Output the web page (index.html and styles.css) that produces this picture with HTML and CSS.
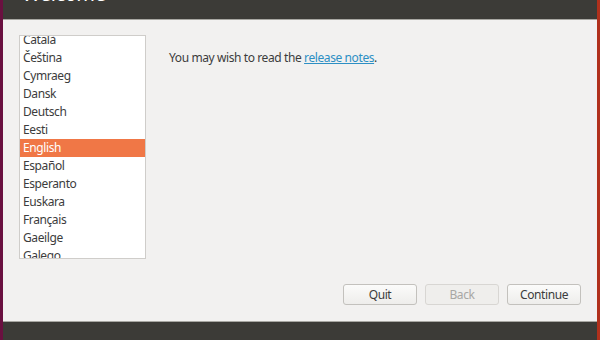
FILE: index.html
```html
<!DOCTYPE html>
<html>
<head>
    <link rel="stylesheet" href="styles.css">
</head>
<body>
    <div class="edge edge-left"></div>
    <div class="window">
        <div class="header">
            <div class="title">Welcome</div>
        </div>
        <div class="content">
            <div class="main">
                <div class="languages">
                    <ul class="lang-list">
                        <li>Català</li>
                        <li>Čeština</li>
                        <li>Cymraeg</li>
                        <li>Dansk</li>
                        <li>Deutsch</li>
                        <li>Eesti</li>
                        <li class="selected">English</li>
                        <li>Español</li>
                        <li>Esperanto</li>
                        <li>Euskara</li>
                        <li>Français</li>
                        <li>Gaeilge</li>
                        <li>Galego</li>
                    </ul>
                </div>
                <p class="notes">You may wish to read the <a href="#">release notes</a>.</p>
            </div>
            <div class="buttons">
                <button class="btn">Quit</button>
                <button class="btn" disabled>Back</button>
                <button class="btn">Continue</button>
            </div>
        </div>
        <div class="footer"></div>
    </div>
    <div class="edge edge-right"></div>
</body>
</html>
```

FILE: styles.css
```css
body {
    margin: 0;
    width: 600px;
    height: 340px;
    display: flex;
    overflow: hidden;
    font-family: "Noto Sans", "DejaVu Sans", sans-serif;
    font-size: 12px;
    letter-spacing: -0.4px;
    color: #3c3c3c;
}
.edge {
    width: 3px;
}
.edge-left {
    background-color: #6a1040;
}
.edge-right {
    background-color: #b0301c;
}
.window {
    flex: 1;
    display: flex;
    flex-direction: column;
    background-color: #f2f1f0;
}
.header {
    height: 19px;
    flex-shrink: 0;
    background-color: #3c3b37;
    border-bottom: 1px solid #a8a7a2;
    overflow: hidden;
}
.title {
    margin: -16px 0 0 19px;
    font-size: 20px;
    line-height: 20px;
    color: #ffffff;
}
.content {
    flex: 1;
    display: flex;
    flex-direction: column;
    padding: 15px 16px 16px 16px;
}
.main {
    flex: 1;
    display: flex;
}
.languages {
    width: 125px;
    height: 222px;
    border: 1px solid #cfcdca;
    background-color: #ffffff;
    overflow: hidden;
}
.lang-list {
    list-style: none;
    margin: -5px 0 0 0;
    padding: 0;
}
.lang-list li {
    height: 18px;
    line-height: 18px;
    padding-left: 3px;
}
.lang-list li.selected {
    background-color: #f07746;
    color: #ffffff;
}
.notes {
    margin: 14px 0 0 23px;
    line-height: 18px;
}
.notes a {
    color: #2d8fc4;
    text-decoration: underline;
}
.buttons {
    display: flex;
    justify-content: flex-end;
    gap: 8px;
}
.btn {
    width: 74px;
    height: 21px;
    padding: 0;
    font-family: inherit;
    font-size: 12px;
    letter-spacing: inherit;
    color: #3c3c3c;
    background: linear-gradient(#fbfbfa, #eeedeb);
    border: 1px solid #c3c1bd;
    border-radius: 3px;
}
.btn:disabled {
    color: #a8a7a4;
    background: #efeeec;
    border-color: #d8d6d3;
}
.footer {
    height: 18px;
    flex-shrink: 0;
    background-color: #3c3b37;
    border-top: 1px solid #a8a7a2;
}
```
